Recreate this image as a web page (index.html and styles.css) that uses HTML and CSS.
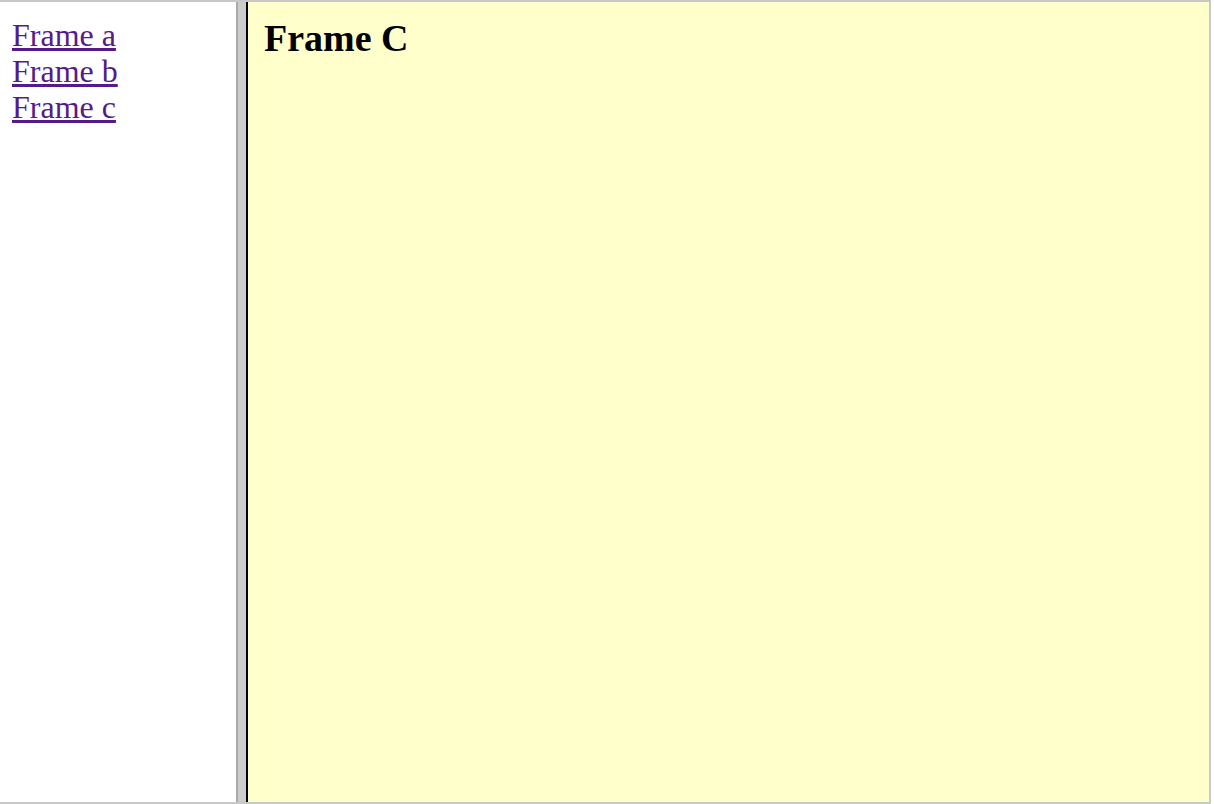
FILE: index.html
```html
<!DOCTYPE html>
<html>
<head>
<meta charset="utf-8">
<link rel="stylesheet" href="styles.css">
</head>
<body>
<div class="frameset">
  <div class="nav">
    <a href="#a" class="link">Frame a</a>
    <a href="#b" class="link">Frame b</a>
    <a href="#c" class="link">Frame c</a>
  </div>
  <div class="divider"></div>
  <div class="content">
    <h1 class="title">Frame C</h1>
  </div>
</div>
</body>
</html>
```

FILE: styles.css
```css
html, body {
  margin: 0;
  padding: 0;
  background: #ffffff;
}
.frameset {
  display: flex;
  width: 1211px;
  height: 804px;
  box-sizing: border-box;
  border-top: 2px solid #c8c8c8;
  border-bottom: 2px solid #c8c8c8;
  border-right: 2px solid #c8c8c8;
}
.nav {
  width: 236px;
  flex: none;
  box-sizing: border-box;
  padding: 15px 12px;
  display: flex;
  flex-direction: column;
  align-items: flex-start;
  background: #ffffff;
}
.link {
  font-family: "Liberation Serif", serif;
  font-size: 32px;
  line-height: 36px;
  color: #551a8b;
  text-decoration: underline;
}
.divider {
  flex: none;
  width: 8px;
  border-left: 2px solid #aaaaaa;
  border-right: 2px solid #000000;
  background: #cccccc;
}
.content {
  flex: 1;
  background: #ffffcc;
  padding: 16px 16px;
}
.title {
  margin: 0;
  font-family: "Liberation Serif", serif;
  font-weight: bold;
  font-size: 38px;
  line-height: 40px;
  color: #000000;
}
```
